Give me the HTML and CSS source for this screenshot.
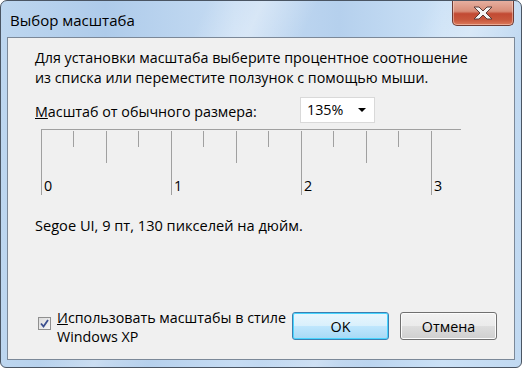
FILE: index.html
```html
<!DOCTYPE html>
<html lang="ru">
<head>
<meta charset="utf-8">
<title>Выбор масштаба</title>
<link rel="stylesheet" href="styles.css">
</head>
<body>
<div class="window">
  <div class="titlebar">
    <div class="title">Выбор масштаба</div>
    <div class="close" aria-label="Закрыть">
      <svg width="24" height="14" viewBox="0 0 24 14">
        <path d="M3 1 H8 L12 5 L16 1 H21 L15 7 L21 13 H16 L12 9 L8 13 H3 L9 7 Z" fill="#f4f4f4" stroke="#5a3a36" stroke-width="1" stroke-linejoin="round"/>
      </svg>
    </div>
  </div>
  <div class="client">
    <p class="intro">Для установки масштаба выберите процентное соотношение<br>из списка или переместите ползунок с помощью мыши.</p>
    <div class="scale-row">
      <span class="scale-label"><u>М</u>асштаб от обычного размера:</span>
      <div class="combo"><span>135%</span><span class="arrow"></span></div>
    </div>
    <svg class="ruler" width="420" height="66" viewBox="0 0 420 66">
      <g stroke="#a0a0a0" stroke-width="1">
        <line x1="0" y1="0.5" x2="420" y2="0.5"/>
        <line x1="0.5" y1="0" x2="0.5" y2="66"/>
        <line x1="130.5" y1="2" x2="130.5" y2="66"/>
        <line x1="260.5" y1="2" x2="260.5" y2="66"/>
        <line x1="390.5" y1="2" x2="390.5" y2="66"/>
        <line x1="65.5" y1="2" x2="65.5" y2="34"/>
        <line x1="195.5" y1="2" x2="195.5" y2="34"/>
        <line x1="325.5" y1="2" x2="325.5" y2="34"/>
        <line x1="32.5" y1="2" x2="32.5" y2="18"/>
        <line x1="97.5" y1="2" x2="97.5" y2="18"/>
        <line x1="162.5" y1="2" x2="162.5" y2="18"/>
        <line x1="227.5" y1="2" x2="227.5" y2="18"/>
        <line x1="292.5" y1="2" x2="292.5" y2="18"/>
        <line x1="357.5" y1="2" x2="357.5" y2="18"/>
      </g>
      <g class="ruler-num">
        <text x="3" y="62">0</text>
        <text x="133" y="62">1</text>
        <text x="263" y="62">2</text>
        <text x="393" y="62">3</text>
      </g>
    </svg>
    <p class="info">Segoe UI, 9 пт, 130 пикселей на дюйм.</p>
    <div class="bottom">
      <label class="check">
        <span class="box">
          <svg width="9" height="9" viewBox="0 0 9 9"><path d="M1 4.5 L3.5 7.5 L8 1" fill="none" stroke="#3b4f8f" stroke-width="1.8"/></svg>
        </span>
        <span class="check-text"><u>И</u>спользовать масштабы в стиле<br>Windows XP</span>
      </label>
      <div class="buttons">
        <button class="btn btn-default">OK</button>
        <button class="btn">Отмена</button>
      </div>
    </div>
  </div>
</div>
</body>
</html>
```

FILE: styles.css
```css
html, body {
  margin: 0;
  padding: 0;
  background: #ffffff;
}

.window {
  width: 522px;
  height: 368px;
  box-sizing: border-box;
  border: 1px solid #4a5563;
  border-radius: 7px 7px 6px 6px;
  padding: 0 6px 7px 6px;
  display: flex;
  flex-direction: column;
  background:
    linear-gradient(115deg, rgba(255,255,255,0) 30%, rgba(255,255,255,0.35) 38%, rgba(255,255,255,0) 46%, rgba(255,255,255,0) 62%, rgba(255,255,255,0.3) 70%, rgba(255,255,255,0) 78%),
    linear-gradient(to right, #bdd6ef 0%, #aecbea 20%, #c6dcf3 45%, #b5d0ed 65%, #cbe1f6 85%, #c1d9f1 100%);
  overflow: hidden;
}

.titlebar {
  height: 36px;
  display: flex;
  justify-content: space-between;
  align-items: flex-start;
  flex: none;
}

.title {
  font-family: "Open Sans", "Noto Sans", sans-serif;
  font-size: 15px;
  color: #000;
  padding: 9px 0 0 3px;
  line-height: 20px;
}

.close {
  width: 62px;
  height: 26px;
  margin-top: -1px;
  margin-right: 1px;
  box-sizing: border-box;
  border: 1px solid #6e3b33;
  border-top: none;
  border-radius: 0 0 5px 5px;
  background: linear-gradient(to bottom, #e7b2a3 0%, #d88d78 45%, #c24a33 55%, #c8583d 80%, #dc7a5b 100%);
  box-shadow: inset 0 0 0 1px rgba(255,230,220,0.45);
  display: flex;
  align-items: center;
  justify-content: center;
}

.client {
  flex: 1;
  border: 1px solid #7b8898;
  background: #f0f0f0;
  display: flex;
  flex-direction: column;
  padding: 0 17px 13px 27px;
  font-family: "Open Sans", "Noto Sans", sans-serif;
  font-size: 14.3px;
  color: #000;
}

.intro {
  margin: 10px 0 0 0;
  line-height: 20px;
}

.scale-row {
  display: flex;
  align-items: flex-start;
  margin-top: 9px;
}

.scale-label {
  width: 265px;
  padding-top: 5px;
  line-height: 20px;
}

.combo {
  width: 75px;
  height: 26px;
  box-sizing: border-box;
  border: 1px solid #d9d9d9;
  background: #fff;
  display: flex;
  align-items: center;
  justify-content: space-between;
  padding: 0 8px 0 6px;
  line-height: 20px;
}

.arrow {
  width: 0;
  height: 0;
  border-left: 4px solid transparent;
  border-right: 4px solid transparent;
  border-top: 4px solid #000;
}

.ruler {
  display: block;
  margin: 6px 0 0 6px;
}

.ruler-num {
  font-family: "Open Sans", "Noto Sans", sans-serif;
  font-size: 14.3px;
  fill: #000;
}

.info {
  margin: 20px 0 0 0;
  line-height: 20px;
  font-size: 14.6px;
}

.bottom {
  margin-top: auto;
  display: flex;
  justify-content: space-between;
  align-items: flex-start;
}

.check {
  display: flex;
  align-items: flex-start;
  padding-left: 3px;
  margin-top: -1px;
}

.box {
  width: 13px;
  height: 13px;
  box-sizing: border-box;
  border: 1px solid #8f8f8f;
  background: linear-gradient(135deg, #dcdcdc, #f6f6f6);
  margin-top: 9px;
  display: flex;
  align-items: center;
  justify-content: center;
}

.check-text {
  margin-left: 6px;
  line-height: 19px;
}

.buttons {
  display: flex;
  gap: 11px;
  margin-top: 3px;
}

.btn {
  width: 97px;
  height: 28px;
  box-sizing: border-box;
  border: 1px solid #707070;
  border-radius: 3px;
  background: linear-gradient(to bottom, #f2f2f2 0%, #ebebeb 48%, #dddddd 52%, #cfcfcf 100%);
  box-shadow: inset 0 0 0 1px #fcfcfc;
  font-family: "Open Sans", "Noto Sans", sans-serif;
  font-size: 14.3px;
  color: #000;
  padding: 0;
}

.btn-default {
  border-color: #3c7fb1;
  background: linear-gradient(to bottom, #eaf6fd 0%, #d9f0fc 48%, #bee6fd 52%, #a7d9f5 100%);
  box-shadow: inset 0 0 0 1px #48d5ff;
}
```
